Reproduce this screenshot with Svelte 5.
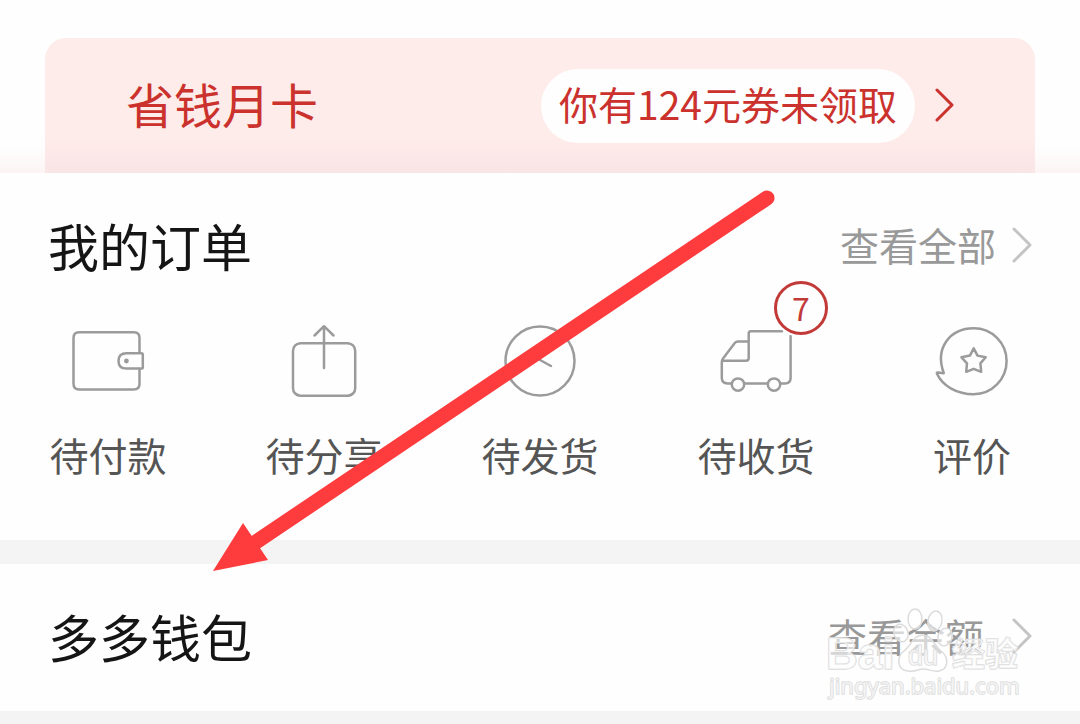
<script>
  const orders = [
    { id: 'pay', label: '待付款' },
    { id: 'share', label: '待分享' },
    { id: 'ship', label: '待发货' },
    { id: 'receive', label: '待收货', count: 7 },
    { id: 'review', label: '评价' }
  ];
</script>

<main>
  <header>
    <a class="card" href="#card">
      <span class="card-name">省钱月卡</span>
      <span class="pill">你有124元券未领取</span>
      <svg class="card-arrow" width="20" height="36" viewBox="0 0 20 36" aria-hidden="true">
        <path d="M2 2 L17 17 L2 32" />
      </svg>
    </a>
  </header>

  <section class="orders">
    <div class="head">
      <h2>我的订单</h2>
      <a class="more" href="#orders">
        <span>查看全部</span>
        <svg width="20" height="38" viewBox="0 0 20 38" aria-hidden="true"><path d="M2 3 L18 19 L2 35" /></svg>
      </a>
    </div>
    <nav>
      {#each orders as order (order.id)}
        <a class="order" href={'#' + order.id}>
          <span class="icon">
            <svg width="80" height="80" viewBox="0 0 80 80" aria-hidden="true">
              {#if order.id === 'pay'}
                <path d="M71.5 32 V18 Q71.5 12.3 65.8 12.3 H11.2 Q5.5 12.3 5.5 18 V63.8 Q5.5 69.5 11.2 69.5 H65.8 Q71.5 69.5 71.5 63.8 V50" />
                <path d="M58.5 33.3 H73.5 Q74.8 33.3 74.8 34.6 V47.2 Q74.8 48.5 73.5 48.5 H58.5 Q50.5 48.5 50.5 40.9 Q50.5 33.3 58.5 33.3 Z" />
                <circle class="dot" cx="58.4" cy="41" r="2.4" />
              {:else if order.id === 'share'}
                <rect x="9" y="23.2" width="62.2" height="52.5" rx="7.5" />
                <path d="M40 6.5 V48 M30.5 15.5 L40 6.2 L49.5 15.5" />
              {:else if order.id === 'ship'}
                <circle cx="40" cy="41" r="34.5" />
                <path d="M40 27 V40 L51 46" />
              {:else if order.id === 'receive'}
                <path d="M66 11.3 H35 Q32.7 11.3 32.7 13.5 V38 Q32.7 40.7 30 40.7 H6 M32 21.4 H22 Q20 21.4 18.8 23 L7.2 38.3 Q5.8 40 5.8 42.5 V57.5 Q5.8 63.4 11.5 63.4 H15.5 M28.5 63.4 H51.5 M64.5 63.4 H69 Q74.6 63.4 74.6 58 V16" />
                <circle cx="22" cy="64.6" r="6.2" />
                <circle cx="58" cy="64.6" r="6.2" />
              {:else}
                <path d="M11.8 53.2 C2.5 28 18 8.2 41.7 8.2 C60 8.2 74.6 22.8 74.6 41 C74.6 59.2 60 74.2 41.7 74.2 C25 74.2 10.5 66 5 53.8 Q4.4 52.2 6 52.4 Z" />
                <path d="M41.7 28.3 L45.5 35.6 L53.7 37.3 L48.4 43.4 L49.2 51.8 L41.7 48.8 L34.2 51.8 L35 43.4 L29.5 37.3 L37.9 35.6 Z" />
              {/if}
            </svg>
            {#if order.count}
              <span class="badge">{order.count}</span>
            {/if}
          </span>
          <span class="label">{order.label}</span>
        </a>
      {/each}
    </nav>
  </section>

  <section class="wallet">
    <div class="head">
      <h2>多多钱包</h2>
      <a class="more wide" href="#wallet">
        <span>查看余额</span>
        <svg width="20" height="38" viewBox="0 0 20 38" aria-hidden="true"><path d="M2 3 L18 19 L2 35" /></svg>
      </a>
    </div>
    <svg class="watermark" width="200" height="100" viewBox="0 0 200 100">
      <text class="brand" x="1" y="64">Bai</text>
      <ellipse cx="90" cy="14" rx="7" ry="10" />
      <ellipse cx="110" cy="16" rx="7" ry="10" transform="rotate(12 110 16)" />
      <ellipse cx="76" cy="28" rx="7" ry="9" transform="rotate(-20 76 28)" />
      <ellipse cx="120" cy="32" rx="7" ry="9" transform="rotate(20 120 32)" />
      <path d="M98 30 C88 30 86 41 79 46 C71 52 72 65 83 66 C91 67 93 64 98 64 C104 64 108 67 114 66 C124 64 124 52 116 46 C109 41 107 30 98 30 Z" />
      <text class="du" x="83" y="60">du</text>
      <text class="cn" x="127" y="61">经验</text>
      <text class="site" x="4" y="89">jingyan.baidu.com</text>
    </svg>
  </section>

  <svg class="pointer" width="580" height="400" viewBox="0 0 580 400" aria-hidden="true">
    <path class="shaft" d="M567 18 L50 366" />
    <path class="tip" d="M13 391 L43 343 L68 380 Z" />
  </svg>
</main>

<style>
  :global(body) {
    margin: 0;
    background: #f4f4f4;
  }
  main {
    position: relative;
    overflow: hidden;
    font-family: 'Noto Sans CJK SC', 'Noto Sans', sans-serif;
    background: #f4f4f4;
  }
  a {
    color: inherit;
    text-decoration: none;
  }
  svg {
    display: block;
    flex: none;
    fill: none;
    stroke-linecap: round;
    stroke-linejoin: round;
  }
  header {
    padding: 38px 45px 0;
    background: linear-gradient(to top, #fdf4f4, #fefefe 26px);
  }
  .card {
    display: flex;
    align-items: center;
    box-sizing: border-box;
    height: 135px;
    padding: 0 80px 0 81px;
    border-radius: 21px 21px 0 0;
    color: #cb322d;
    background: linear-gradient(to top, #f9e4e6, #feecea 36px);
  }
  .card-name {
    flex: 1;
    padding-bottom: 6px;
    font-size: 48px;
    line-height: 60px;
  }
  .pill {
    padding: 4px 18px 10px;
    border-radius: 37px;
    font-size: 39px;
    line-height: 60px;
    background: #fefefe;
  }
  .card-arrow {
    margin-left: 20px;
    stroke: #cb322d;
    stroke-width: 3;
  }
  section {
    background: #fefefe;
  }
  .orders {
    padding: 41px 0 66px;
    margin-bottom: 24px;
  }
  .wallet {
    position: relative;
    padding: 41px 0 44px;
    margin-bottom: 13px;
  }
  .head {
    display: flex;
    align-items: center;
    justify-content: space-between;
    padding: 0 48px 0 48px;
  }
  h2 {
    margin: 0;
    font-size: 51px;
    font-weight: 400;
    line-height: 60px;
    color: #151515;
  }
  .more {
    display: flex;
    align-items: center;
    gap: 16px;
    font-size: 39px;
    line-height: 60px;
    color: #999;
  }
  .more span {
    padding-bottom: 2px;
  }
  .more.wide {
    gap: 28px;
  }
  .more svg {
    stroke: #c4c4c4;
    stroke-width: 3;
  }
  nav {
    display: grid;
    grid-template-columns: repeat(5, 1fr);
    margin-top: 44px;
  }
  .order {
    display: flex;
    flex-direction: column;
    align-items: center;
    gap: 34px;
  }
  .icon {
    position: relative;
  }
  .icon svg {
    stroke: #9b9b9b;
    stroke-width: 2.5;
  }
  .icon .dot {
    fill: #9b9b9b;
    stroke: none;
  }
  .badge {
    position: absolute;
    top: -39px;
    left: 58px;
    box-sizing: border-box;
    width: 54px;
    height: 54px;
    border: 3px solid #c23a38;
    border-radius: 50%;
    font-size: 32px;
    line-height: 46px;
    text-align: center;
    color: #c23a38;
    background: #fefefe;
    box-shadow: 0 0 0 2px #fefefe;
  }
  .label {
    font-size: 39px;
    line-height: 40px;
    color: #555;
  }
  .watermark {
    position: absolute;
    top: 41px;
    right: 55px;
    fill: #fff;
    fill-opacity: 0.6;
    stroke: #dcdcdc;
    stroke-width: 1.5;
  }
  .watermark text {
    font-family: 'Liberation Sans', 'Noto Sans CJK SC', sans-serif;
    font-weight: 700;
    paint-order: stroke;
  }
  .watermark .brand {
    font-size: 44px;
  }
  .watermark .du {
    font-size: 27px;
    font-weight: 400;
  }
  .watermark .cn {
    font-family: 'Noto Sans CJK SC', sans-serif;
    font-size: 33px;
  }
  .watermark .site {
    font-family: 'Noto Sans', sans-serif;
    font-size: 22px;
    font-weight: 400;
  }
  .pointer {
    position: absolute;
    top: 180px;
    left: 200px;
    pointer-events: none;
  }
  .shaft {
    stroke: #fe3b3d;
    stroke-width: 15;
  }
  .tip {
    fill: #fe3b3d;
  }
</style>
